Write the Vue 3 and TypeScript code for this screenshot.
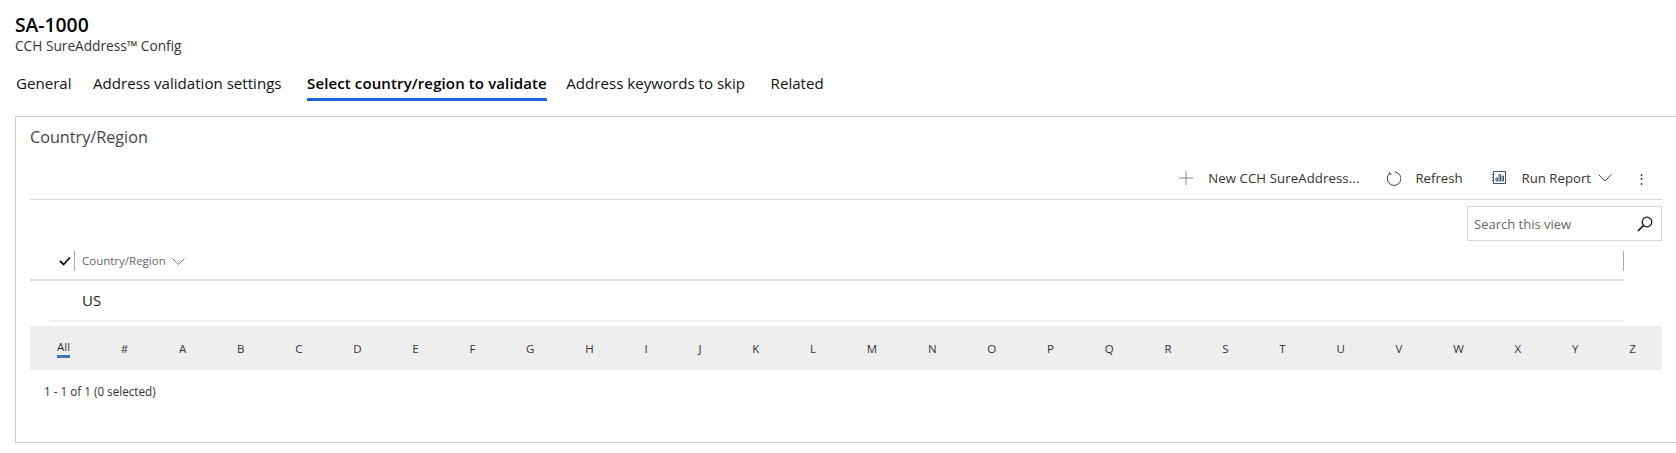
<script setup lang="ts">
const tabs = ['General', 'Address validation settings', 'Select country/region to validate', 'Address keywords to skip', 'Related']
const letters = ['#', ...'ABCDEFGHIJKLMNOPQRSTUVWXYZ'.split('')]
</script>

<template>
  <div class="page">
    <header class="head">
      <h1 class="title">SA-1000</h1>
      <div class="sub">CCH SureAddress™ Config</div>
    </header>
    <nav class="tabs">
      <span v-for="(t, i) in tabs" :key="t" class="tab" :class="{ on: i === 2 }">{{ t }}</span>
    </nav>
    <section class="card">
      <h2 class="cardtitle">Country/Region</h2>
      <div class="cmds">
        <span class="cmd new">
          <svg class="ic" width="14" height="14" viewBox="0 0 14 14"><path d="M7 0v14M0 7h14" stroke="#7a8a96" stroke-width="1" fill="none" /></svg>
          <span>New CCH SureAddress...</span>
        </span>
        <span class="cmd refresh">
          <svg class="ic" width="15" height="15" viewBox="0 0 15 15"><path d="M3.800 2.400A6.800 6.800 0 1 0 9 .9M3.300.8v2.300h2.400" stroke="#444" stroke-width="1" fill="none" /></svg>
          <span>Refresh</span>
        </span>
        <span class="cmd">
          <svg class="ic report" width="14" height="14" viewBox="0 0 14 14"><path d="M1.500.5h12v12h-12zM0 3.500h1.500M0 6.500h1.500M0 9.500h1.500M4 10V7h1.500v3zM7 10V3.500h1.500V10zM10 10V5h1.500v5z" stroke="#3d5a6c" stroke-width="1" fill="none" /></svg>
          <span>Run Report</span>
          <svg class="chev" width="14" height="8" viewBox="0 0 14 8"><path d="M.5.5L7 7 13.500.5" stroke="#444" fill="none" /></svg>
        </span>
        <span class="more">⋮</span>
      </div>
      <div class="searchrow">
        <div class="search">
          <span class="ph">Search this view</span>
          <svg width="16" height="16" viewBox="0 0 16 16"><circle cx="10" cy="6" r="4.800" stroke="#111" stroke-width="1.300" fill="none" /><path d="M6.500 9.500L1 15" stroke="#111" stroke-width="1.700" /></svg>
        </div>
      </div>
      <div class="gridhead">
        <svg class="check" width="12" height="10" viewBox="0 0 12 10"><path d="M1 5l3.500 3.500L11 1.500" stroke="#111" stroke-width="1.800" fill="none" /></svg>
        <span class="colname">Country/Region
          <svg class="colchev" width="13" height="7" viewBox="0 0 13 7"><path d="M.5.5l6 6 6-6" stroke="#777" fill="none" /></svg>
        </span>
        <span class="colend"></span>
      </div>
      <div class="row"><span class="cell">US</span></div>
      <div class="jump">
        <span class="all">All</span>
        <span v-for="l in letters" :key="l" class="letter">{{ l }}</span>
      </div>
      <div class="status">1 - 1 of 1 (0 selected)</div>
    </section>
  </div>
</template>

<style>
html, body { margin: 0; background: #fff; }
</style>

<style scoped>
.page { width: 1676px; height: 453px; box-sizing: border-box; padding: 13px 0 0 15px; overflow: hidden; font-family: "Open Sans", "Noto Sans", sans-serif; color: #222; }
.head { height: 60px; }
.title { margin: 0; font-size: 19.300px; line-height: 24px; font-weight: 600; color: #000; }
.sub { font-size: 13.700px; line-height: 18px; font-weight: 400; color: #333; }
.tabs { display: flex; height: 43px; margin-left: 1px; }
.tab { font-size: 15.100px; line-height: 20px; height: 28px; box-sizing: border-box; color: #111; margin-right: 25.500px; }
.tab:first-child { margin-right: 21.500px; }
.tab.on { font-size: 15px; font-weight: 600; letter-spacing: .12px; color: #000; border-bottom: 3px solid #1f63e0; margin-right: 19.500px; }
.card { width: 1661px; height: 327px; box-sizing: border-box; border: 1px solid #ccc; border-right: 0; padding: 10px 14px 0 14px; }
.cardtitle { margin: 0; font-size: 16.200px; line-height: 20px; font-weight: 400; color: #444; height: 28px; }
.cmds { display: flex; justify-content: flex-end; align-items: center; padding-top: 2px; height: 42px; border-bottom: 1px solid #d8d8d8; font-size: 13.200px; color: #333; }
.cmd { display: inline-flex; align-items: center; margin-right: 29px; }
.cmd:nth-child(3) { margin-right: 0; }
.new { margin-right: 27px; letter-spacing: .1px; }
.new .ic { margin-right: 15px; }
.refresh .ic { margin-right: 14px; }
.ic { margin-right: 16px; }
.chev { margin-left: 7px; }
.more { width: 42px; margin-left: 8px; text-align: center; font-size: 13px; }
.searchrow { display: flex; justify-content: flex-end; height: 45px; padding-top: 6px; box-sizing: border-box; }
.search { width: 195px; height: 35px; box-sizing: border-box; border: 1px solid #d8d8d8; display: flex; align-items: center; justify-content: space-between; padding: 0 8px 0 6px; }
.ph { font-size: 13px; color: #666; }
.gridhead { display: flex; align-items: center; height: 36px; box-sizing: border-box; padding-bottom: 2px; border-bottom: 2px solid #dcdcdc; margin-right: 38px; }
.check { margin-left: 29px; }
.colname { font-size: 11.500px; color: #666; border-left: 1px solid #aaa; margin-left: 3px; padding-left: 7px; height: 20px; line-height: 20px; }
.colchev { margin-left: 3px; }
.colend { margin-left: auto; width: 1px; height: 20px; background: #aaa; }
.row { height: 41px; box-sizing: border-box; font-size: 15px; line-height: 39px; margin-left: 20px; padding-left: 32px; margin-right: 38px; border-bottom: 2px solid #f3f3f3; }
.jump { display: flex; justify-content: space-between; align-items: center; background: #eee; height: 44px; margin-top: 4px; padding: 0 26px 0 27px; font-size: 11.500px; color: #333; }
.all { width: 13px; text-align: center; border-bottom: 3px solid #3b79b7; line-height: 16px; }
.letter { flex: none; text-align: center; }
.status { margin-top: 13px; margin-left: 14px; font-size: 11.700px; line-height: 16px; color: #333; }
</style>
